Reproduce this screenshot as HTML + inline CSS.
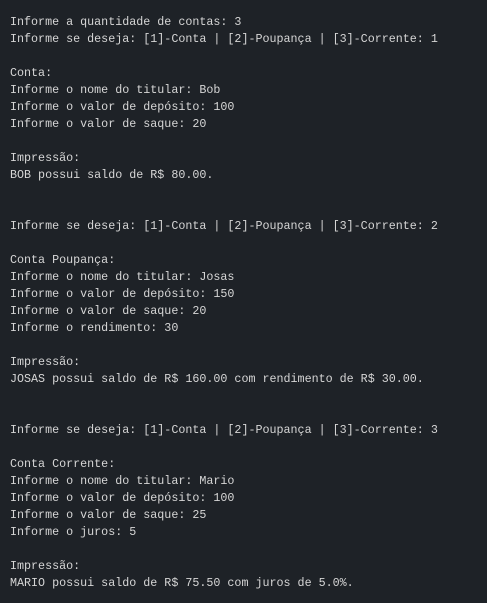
<!DOCTYPE html>
<html><head><meta charset="utf-8"><style>
html,body{margin:0;padding:0;background:#1e2227;width:487px;height:603px;overflow:hidden}
pre{margin:0;padding:14px 0 0 10px;font-family:"Liberation Mono",monospace;font-size:11.7px;line-height:17px;color:#d6d6d6;white-space:pre}
</style></head><body><pre>Informe a quantidade de contas: 3
Informe se deseja: [1]-Conta | [2]-Poupança | [3]-Corrente: 1

Conta:
Informe o nome do titular: Bob
Informe o valor de depósito: 100
Informe o valor de saque: 20

Impressão:
BOB possui saldo de R$ 80.00.


Informe se deseja: [1]-Conta | [2]-Poupança | [3]-Corrente: 2

Conta Poupança:
Informe o nome do titular: Josas
Informe o valor de depósito: 150
Informe o valor de saque: 20
Informe o rendimento: 30

Impressão:
JOSAS possui saldo de R$ 160.00 com rendimento de R$ 30.00.


Informe se deseja: [1]-Conta | [2]-Poupança | [3]-Corrente: 3

Conta Corrente:
Informe o nome do titular: Mario
Informe o valor de depósito: 100
Informe o valor de saque: 25
Informe o juros: 5

Impressão:
MARIO possui saldo de R$ 75.50 com juros de 5.0%.</pre></body></html>
